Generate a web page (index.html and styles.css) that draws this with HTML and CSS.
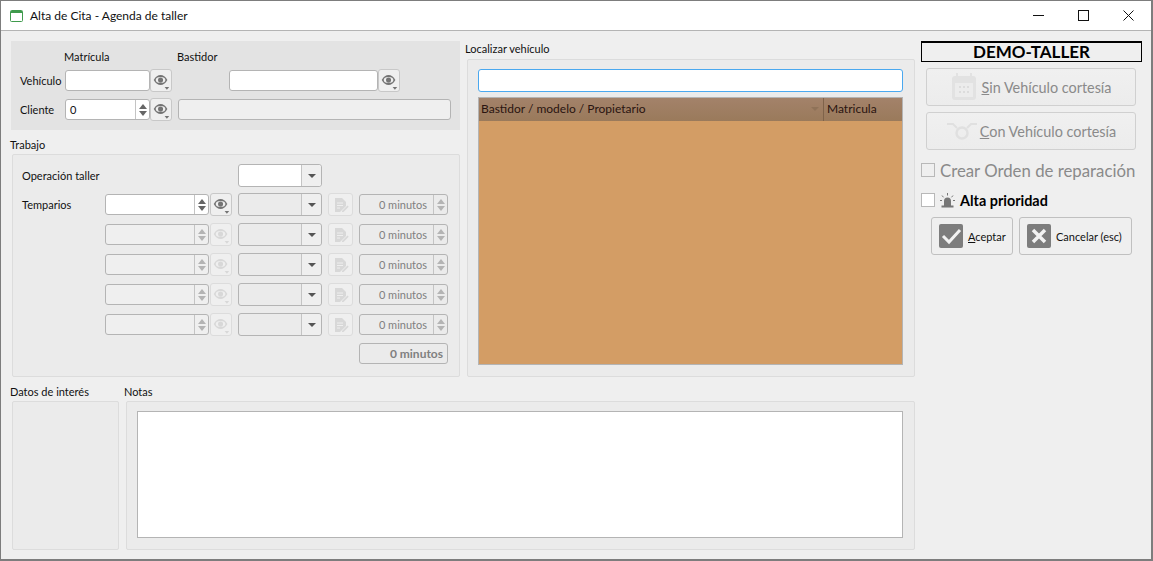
FILE: index.html
```html
<!DOCTYPE html>
<html>
<head>
    <title>Alta de Cita - Agenda de taller</title>
    <meta charset="utf-8" />
    <link rel="stylesheet" href="styles.css">
</head>
<body>
    <svg class="defs" width="0" height="0">
        <symbol id="eye" viewBox="0 0 22 22">
            <path d="M3 10c2-3.700 4.700-5.500 7.500-5.500s5.500 1.800 7.500 5.500c-2 3.700-4.700 5.500-7.500 5.500S5 13.700 3 10z" fill="currentColor"/>
            <ellipse cx="10.500" cy="10" rx="5.300" ry="3.300" fill="#efefef"/>
            <circle cx="10.500" cy="10" r="2.800" fill="currentColor"/>
            <path d="M15 17.500h5l-2.500 3z" fill="currentColor"/>
        </symbol>
        <symbol id="doc" viewBox="0 0 16 16">
            <path d="M2 1h7l4 4v4l-5 5-1 1H2z" fill="currentColor"/>
            <path d="M4 6h6M4 8.500h6M4 11h3" stroke="#efefef" fill="none"/>
            <path d="M9 14l5.500-5.500 1.200 1.200L10.500 15H9z" fill="currentColor"/>
        </symbol>
    </svg>

    <div id="window">
        <header class="titlebar">
            <svg class="app-icon" width="13" height="12" viewBox="0 0 13 12">
                <rect x="0.500" y="0.500" width="12" height="11" rx="1" fill="#fff" stroke="#3f9a4c"/>
                <rect x="1" y="1" width="11" height="2" fill="#3f9a4c"/>
            </svg>
            <span class="title">Alta de Cita - Agenda de taller</span>
            <div class="controls">
                <span class="control"><svg width="11" height="11" viewBox="0 0 11 11"><path d="M0 5.500h11" stroke="#111"/></svg></span>
                <span class="control"><svg width="11" height="11" viewBox="0 0 11 11"><rect x="0.500" y="0.500" width="10" height="10" fill="none" stroke="#111"/></svg></span>
                <span class="control"><svg width="11" height="11" viewBox="0 0 11 11"><path d="M0.500 0.500l10 10M10.500 0.500l-10 10" stroke="#111"/></svg></span>
            </div>
        </header>

        <main class="content">
            <div class="forms">
                <div class="top">
                    <div class="left">
                        <section class="vehicle">
                            <div class="vehicle-head">
                                <span class="col-matricula">Matrícula</span>
                                <span>Bastidor</span>
                            </div>
                            <div class="vehicle-row">
                                <label class="row-label">Vehículo</label>
                                <div class="input w85"></div>
                                <button class="tool"><svg width="22" height="22"><use href="#eye"/></svg></button>
                                <div class="input w149 push57"></div>
                                <button class="tool"><svg width="22" height="22"><use href="#eye"/></svg></button>
                            </div>
                            <div class="vehicle-row">
                                <label class="row-label">Cliente</label>
                                <div class="input spin w85"><span class="value">0</span><span class="arrows"><i class="up"></i><i class="down"></i></span></div>
                                <button class="tool"><svg width="22" height="22"><use href="#eye"/></svg></button>
                                <div class="input disabled w273 push6"></div>
                            </div>
                        </section>

                        <h2 class="caption trabajo-caption">Trabajo</h2>
                        <section class="group trabajo">
                            <div class="work-row first">
                                <label class="work-label">Operación taller</label>
                                <div class="combo"><span class="combo-field"></span><span class="combo-arrow"><i></i></span></div>
                            </div>
                            <div class="work-row">
                                <label class="work-label short">Temparios</label>
                                <div class="input spin w104"><span class="arrows"><i class="up"></i><i class="down"></i></span></div>
                                <button class="tool push1"><svg width="22" height="22"><use href="#eye"/></svg></button>
                                <div class="combo off"><span class="combo-field"></span><span class="combo-arrow"><i></i></span></div>
                                <button class="tool doc off"><svg width="16" height="16"><use href="#doc"/></svg></button>
                                <div class="minutes"><span class="value">0 minutos</span><span class="arrows"><i class="up"></i><i class="down"></i></span></div>
                            </div>
                            <div class="work-row indent">
                                <div class="input spin w104 disabled"><span class="arrows"><i class="up"></i><i class="down"></i></span></div>
                                <button class="tool off push1"><svg width="22" height="22"><use href="#eye"/></svg></button>
                                <div class="combo off"><span class="combo-field"></span><span class="combo-arrow"><i></i></span></div>
                                <button class="tool doc off"><svg width="16" height="16"><use href="#doc"/></svg></button>
                                <div class="minutes"><span class="value">0 minutos</span><span class="arrows"><i class="up"></i><i class="down"></i></span></div>
                            </div>
                            <div class="work-row indent">
                                <div class="input spin w104 disabled"><span class="arrows"><i class="up"></i><i class="down"></i></span></div>
                                <button class="tool off push1"><svg width="22" height="22"><use href="#eye"/></svg></button>
                                <div class="combo off"><span class="combo-field"></span><span class="combo-arrow"><i></i></span></div>
                                <button class="tool doc off"><svg width="16" height="16"><use href="#doc"/></svg></button>
                                <div class="minutes"><span class="value">0 minutos</span><span class="arrows"><i class="up"></i><i class="down"></i></span></div>
                            </div>
                            <div class="work-row indent">
                                <div class="input spin w104 disabled"><span class="arrows"><i class="up"></i><i class="down"></i></span></div>
                                <button class="tool off push1"><svg width="22" height="22"><use href="#eye"/></svg></button>
                                <div class="combo off"><span class="combo-field"></span><span class="combo-arrow"><i></i></span></div>
                                <button class="tool doc off"><svg width="16" height="16"><use href="#doc"/></svg></button>
                                <div class="minutes"><span class="value">0 minutos</span><span class="arrows"><i class="up"></i><i class="down"></i></span></div>
                            </div>
                            <div class="work-row indent">
                                <div class="input spin w104 disabled"><span class="arrows"><i class="up"></i><i class="down"></i></span></div>
                                <button class="tool off push1"><svg width="22" height="22"><use href="#eye"/></svg></button>
                                <div class="combo off"><span class="combo-field"></span><span class="combo-arrow"><i></i></span></div>
                                <button class="tool doc off"><svg width="16" height="16"><use href="#doc"/></svg></button>
                                <div class="minutes"><span class="value">0 minutos</span><span class="arrows"><i class="up"></i><i class="down"></i></span></div>
                            </div>
                            <div class="total">0 minutos</div>
                        </section>
                    </div>

                    <div class="middle">
                        <h2 class="caption">Localizar vehículo</h2>
                        <section class="group locate">
                            <div class="search"></div>
                            <div class="table">
                                <div class="table-head">
                                    <span class="th-main">Bastidor / modelo / Propietario<i class="sort"></i></span>
                                    <span class="th-plate">Matricula</span>
                                </div>
                            </div>
                        </section>
                    </div>
                </div>

                <div class="bottom">
                    <div class="datos">
                        <h2 class="caption">Datos de interés</h2>
                        <section class="group datos-box"></section>
                    </div>
                    <div class="notas">
                        <h2 class="caption">Notas</h2>
                        <section class="group notas-box"><div class="notes-area"></div></section>
                    </div>
                </div>
            </div>

            <aside class="side">
                <div class="demo">DEMO-TALLER</div>
                <button class="big-btn">
                    <svg width="26" height="28" viewBox="0 0 26 28">
                        <rect x="1" y="3" width="24" height="24" rx="3" fill="#e2e2e2"/>
                        <rect x="5" y="0" width="2" height="5" fill="#e2e2e2"/>
                        <rect x="19" y="0" width="2" height="5" fill="#e2e2e2"/>
                        <rect x="4" y="10" width="18" height="14" fill="#ececec"/>
                        <path d="M8 13h2v2H8zM12 13h2v2h-2zM16 13h2v2h-2zM8 18h2v2H8zM12 18h2v2h-2zM16 18h2v2h-2z" fill="#dcdcdc"/>
                    </svg>
                    <span><u>S</u>in Vehículo cortesía</span>
                </button>
                <button class="big-btn con">
                    <svg width="32" height="18" viewBox="0 0 32 18">
                        <circle cx="16" cy="11" r="5.500" fill="none" stroke="#e0e0e0" stroke-width="2.500"/>
                        <path d="M1 2h6l4 4M31 2h-6l-4 4" fill="none" stroke="#e0e0e0" stroke-width="2"/>
                    </svg>
                    <span><u>C</u>on Vehículo cortesía</span>
                </button>
                <label class="check crear"><span class="box off"></span>Crear Orden de reparación</label>
                <label class="check alta">
                    <span class="box"></span>
                    <svg width="15" height="15" viewBox="0 0 15 15">
                        <path d="M4 13V8a3.500 3.500 0 017 0v5z" fill="#777"/>
                        <rect x="1.500" y="12.500" width="12" height="2" fill="#777"/>
                        <path d="M7.500 0v2.500M2 2.500l1.500 1.800M13 2.500l-1.500 1.800M0 7.500h2M13 7.500h2" stroke="#777"/>
                    </svg>
                    Alta prioridad
                </label>
                <div class="actions">
                    <button class="action ok">
                        <span class="square"><svg width="24" height="24" viewBox="0 0 24 24"><path d="M4 12l6 6L21 6" fill="none" stroke="#f2f2f2" stroke-width="3"/></svg></span>
                        <span><u>A</u>ceptar</span>
                    </button>
                    <button class="action cancel">
                        <span class="square"><svg width="24" height="24" viewBox="0 0 24 24"><path d="M6 6l12 12M18 6L6 18" fill="none" stroke="#f2f2f2" stroke-width="3.500"/></svg></span>
                        <span>Cancelar (esc)</span>
                    </button>
                </div>
            </aside>
        </main>
    </div>
</body>
</html>
```

FILE: styles.css
```css
* {
    box-sizing: border-box;
}

html, body {
    margin: 0;
    height: 561px;
    overflow: hidden;
}

body {
    font-family: Lato, "Liberation Sans", sans-serif;
    font-size: 11px;
    color: #111;
}

.defs {
    position: absolute;
}

button {
    font: inherit;
    color: inherit;
    padding: 0;
}

#window {
    width: 1153px;
    height: 561px;
    background-color: #efefef;
    border: 1px solid #7d7d7d;
    border-width: 1px 2px 2px 1px;
    display: flex;
    flex-direction: column;
}

/* title bar */
.titlebar {
    height: 30px;
    flex: none;
    background-color: #fff;
    border-bottom: 1px solid #b4b4b4;
    display: flex;
    align-items: center;
    padding-left: 9px;
}

.app-icon {
    margin-right: 7px;
}

.title {
    font-size: 12px;
}

.controls {
    margin-left: auto;
    display: flex;
}

.control {
    width: 45px;
    height: 29px;
    display: flex;
    align-items: center;
    justify-content: center;
}

/* main layout */
.content {
    flex: 1;
    display: flex;
    padding: 10px 0 0 9px;
}

.forms {
    width: 906px;
}

.top {
    display: flex;
    height: 335px;
}

.left {
    width: 455px;
}

.middle {
    width: 450px;
}

.caption {
    margin: 0;
    font-size: 11px;
    font-weight: normal;
    line-height: 15px;
}

.group {
    background-color: #ebebeb;
    border: 1px solid #dcdcdc;
    border-radius: 2px;
}

/* vehicle panel */
.vehicle {
    width: 449px;
    margin-left: 1px;
    height: 89px;
    background-color: #e3e3e3;
    padding: 8px 9px 0;
}

.vehicle-head {
    display: flex;
    line-height: 15px;
    padding-left: 44px;
    margin-bottom: 5px;
}

.col-matricula {
    width: 113px;
}

.vehicle-row {
    display: flex;
    align-items: center;
    height: 23px;
    margin-bottom: 6px;
}

.row-label {
    width: 45px;
}

.input {
    height: 21px;
    background-color: #fff;
    border: 1px solid #b4b4b4;
    border-radius: 3px;
    display: flex;
    align-items: center;
}

.input.disabled {
    background-color: #efefef;
}

.w85 { width: 85px; }
.w104 { width: 104px; }
.w149 { width: 149px; }
.w273 { width: 273px; }
.push57 { margin-left: 57px; }
.push6 { margin-left: 6px; }
.push1 { margin-left: 1px; }

.value {
    padding-left: 4px;
    flex: 1;
}

.spin {
    justify-content: flex-end;
}

.arrows {
    width: 14px;
    height: 100%;
    border-left: 1px solid #c4c4c4;
    display: flex;
    flex-direction: column;
    align-items: center;
    justify-content: center;
    gap: 2px;
    flex: none;
}

.up, .down {
    width: 0;
    height: 0;
    border-left: 4px solid transparent;
    border-right: 4px solid transparent;
}

.up {
    border-bottom: 5px solid #666;
}

.down {
    border-top: 5px solid #666;
}

.disabled .up, .minutes .up {
    border-bottom-color: #b4b4b4;
}

.disabled .down, .minutes .down {
    border-top-color: #b4b4b4;
}

.tool {
    width: 22px;
    height: 23px;
    background-color: #efefef;
    border: 1px solid #c8c8c8;
    border-radius: 3px;
    color: #747474;
    display: flex;
    align-items: center;
    justify-content: center;
    flex: none;
}

.tool svg {
    display: block;
}

.tool.off {
    color: #d8d8d8;
    border-color: #dcdcdc;
}

/* trabajo */
.trabajo-caption {
    margin-top: 7px;
}

.trabajo {
    margin: 2px 0 0 2px;
    width: 448px;
    height: 223px;
    padding: 9px 0 0 9px;
}

.work-row {
    display: flex;
    align-items: center;
    height: 23px;
    margin-bottom: 7px;
}

.work-row.first {
    margin-bottom: 6px;
}

.work-label {
    width: 216px;
}

.work-label.short {
    width: 83px;
}

.indent {
    padding-left: 83px;
}

.combo {
    width: 84px;
    height: 23px;
    margin-left: 6px;
    border: 1px solid #b4b4b4;
    border-radius: 3px;
    background-color: #fff;
    display: flex;
}

.first .combo {
    margin-left: 0;
}

.combo.off {
    background-color: #ebebeb;
}

.combo-field {
    flex: 1;
}

.combo-arrow {
    width: 20px;
    background-color: #efefef;
    border-left: 1px solid #c4c4c4;
    border-radius: 0 3px 3px 0;
    display: flex;
    align-items: center;
    justify-content: center;
}

.combo-arrow i {
    border-left: 4px solid transparent;
    border-right: 4px solid transparent;
    border-top: 4px solid #555;
}

.doc {
    margin-left: 6px;
    width: 25px;
}

.minutes {
    width: 89px;
    height: 21px;
    margin-left: 6px;
    border: 1px solid #b4b4b4;
    border-radius: 3px;
    color: #808080;
    display: flex;
    align-items: center;
    text-align: right;
}

.minutes .value {
    padding-right: 6px;
}

.total {
    width: 89px;
    height: 21px;
    margin: 0 0 0 337px;
    border: 1px solid #b4b4b4;
    border-radius: 3px;
    color: #808080;
    font-size: 12px;
    font-weight: bold;
    text-align: right;
    line-height: 19px;
    padding-right: 4px;
}

/* localizar */
.locate {
    margin: 3px 0 0 2px;
    width: 448px;
    height: 318px;
    padding: 9px 11px 0 10px;
}

.search {
    height: 23px;
    background-color: #fff;
    border: 1px solid #4aa8ef;
    border-radius: 3px;
    margin-bottom: 5px;
}

.table {
    height: 268px;
    background-color: #d39d65;
    border: 1px solid #b4b4b4;
}

.table-head {
    height: 23px;
    background: linear-gradient(#a3826a, #9a7a5b);
    display: flex;
    line-height: 21px;
    font-size: 12px;
    color: #2a1410;
}

.th-main {
    width: 345px;
    padding-left: 2px;
    border-right: 1px solid #7f634a;
    position: relative;
}

.sort {
    position: absolute;
    right: 4px;
    top: 9px;
    border-left: 4px solid transparent;
    border-right: 4px solid transparent;
    border-top: 4px solid #8f7258;
}

.th-plate {
    padding-left: 3px;
}

/* bottom */
.bottom {
    display: flex;
    margin-top: 8px;
}

.datos {
    width: 114px;
}

.datos-box {
    margin: 2px 0 0 2px;
    width: 107px;
    height: 149px;
}

.notas-box {
    margin: 2px 0 0 2px;
    width: 789px;
    height: 149px;
    padding: 9px 11px 0 10px;
}

.notes-area {
    height: 127px;
    background-color: #fff;
    border: 1px solid #b4b4b4;
}

/* right column */
.side {
    margin-left: 5px;
    width: 221px;
}

.demo {
    height: 21px;
    border: 1px solid #000;
    border-width: 2px 1px 1px 1px;
    text-align: center;
    font-size: 17px;
    font-weight: bold;
    line-height: 17px;
    color: #000;
}

.big-btn {
    width: 210px;
    height: 38px;
    margin: 6px 0 0 5px;
    background: linear-gradient(#f0f0f0, #ececec);
    border: 1px solid #d0d0d0;
    border-radius: 3px;
    color: #8a8a8a;
    font-size: 14.400px;
    display: flex;
    align-items: center;
    justify-content: center;
    gap: 5px;
}

.big-btn.con {
    gap: 2px;
}

.check {
    display: flex;
    align-items: center;
    white-space: nowrap;
}

.box {
    width: 14px;
    height: 14px;
    background-color: #fff;
    border: 1px solid #b8b8b8;
    flex: none;
}

.box.off {
    background-color: #efefef;
}

.crear {
    margin-top: 10px;
    height: 20px;
    gap: 5px;
    font-size: 16.800px;
    color: #8a8a8a;
}

.alta {
    margin-top: 10px;
    height: 20px;
    gap: 5px;
    font-size: 14.400px;
    font-weight: bold;
    color: #000;
}

.actions {
    display: flex;
    gap: 6px;
    margin: 7px 0 0 10px;
}

.action {
    height: 38px;
    background-color: #efefef;
    border: 1px solid #c0c0c0;
    border-radius: 3px;
    display: flex;
    align-items: center;
    padding-left: 7px;
    gap: 5px;
}

.ok {
    width: 82px;
}

.cancel {
    width: 113px;
}

.square {
    width: 24px;
    height: 24px;
    background-color: #7d7d7d;
    border-radius: 2px;
    display: block;
    flex: none;
}

.square svg {
    display: block;
}
```
